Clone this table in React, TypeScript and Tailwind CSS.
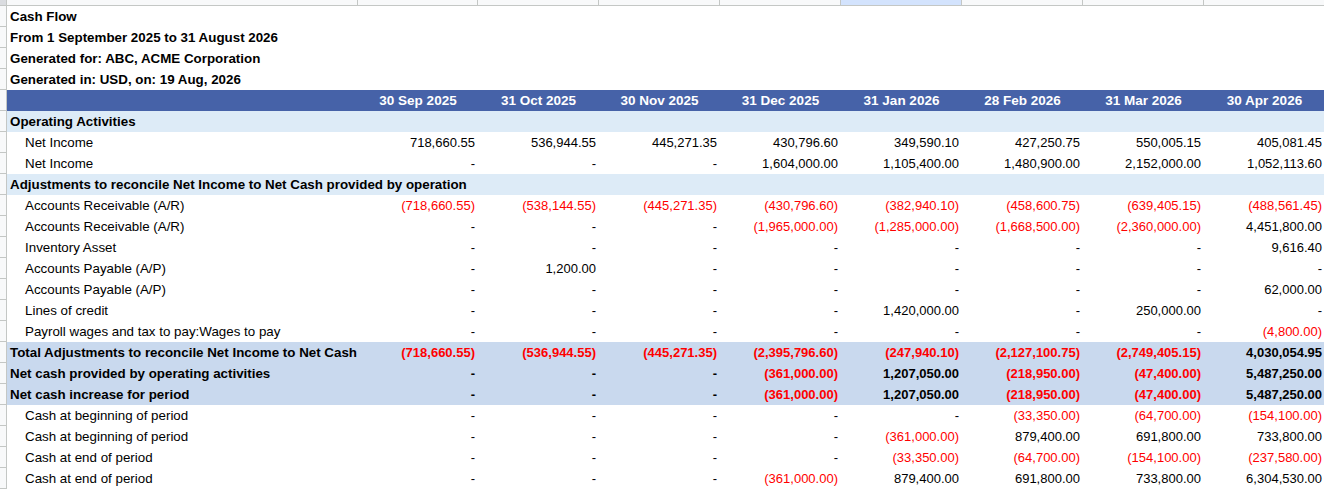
import React from "react";

type Kind = "title" | "section" | "item" | "total";

interface Row {
    kind: Kind;
    label: string;
    values?: string[];
}

const dates = [
    "30 Sep 2025",
    "31 Oct 2025",
    "30 Nov 2025",
    "31 Dec 2025",
    "31 Jan 2026",
    "28 Feb 2026",
    "31 Mar 2026",
    "30 Apr 2026",
];

const titleRows: Row[] = [
    { kind: "title", label: "Cash Flow" },
    { kind: "title", label: "From 1 September 2025 to 31 August 2026" },
    { kind: "title", label: "Generated for: ABC, ACME Corporation" },
    { kind: "title", label: "Generated in: USD, on: 19 Aug, 2026" },
];

const bodyRows: Row[] = [
    { kind: "section", label: "Operating Activities" },
    {
        kind: "item",
        label: "Net Income",
        values: ["718,660.55", "536,944.55", "445,271.35", "430,796.60", "349,590.10", "427,250.75", "550,005.15", "405,081.45"],
    },
    {
        kind: "item",
        label: "Net Income",
        values: ["-", "-", "-", "1,604,000.00", "1,105,400.00", "1,480,900.00", "2,152,000.00", "1,052,113.60"],
    },
    { kind: "section", label: "Adjustments to reconcile Net Income to Net Cash provided by operation" },
    {
        kind: "item",
        label: "Accounts Receivable (A/R)",
        values: ["(718,660.55)", "(538,144.55)", "(445,271.35)", "(430,796.60)", "(382,940.10)", "(458,600.75)", "(639,405.15)", "(488,561.45)"],
    },
    {
        kind: "item",
        label: "Accounts Receivable (A/R)",
        values: ["-", "-", "-", "(1,965,000.00)", "(1,285,000.00)", "(1,668,500.00)", "(2,360,000.00)", "4,451,800.00"],
    },
    {
        kind: "item",
        label: "Inventory Asset",
        values: ["-", "-", "-", "-", "-", "-", "-", "9,616.40"],
    },
    {
        kind: "item",
        label: "Accounts Payable (A/P)",
        values: ["-", "1,200.00", "-", "-", "-", "-", "-", "-"],
    },
    {
        kind: "item",
        label: "Accounts Payable (A/P)",
        values: ["-", "-", "-", "-", "-", "-", "-", "62,000.00"],
    },
    {
        kind: "item",
        label: "Lines of credit",
        values: ["-", "-", "-", "-", "1,420,000.00", "-", "250,000.00", "-"],
    },
    {
        kind: "item",
        label: "Payroll wages and tax to pay:Wages to pay",
        values: ["-", "-", "-", "-", "-", "-", "-", "(4,800.00)"],
    },
    {
        kind: "total",
        label: "Total Adjustments to reconcile Net Income to Net Cash",
        values: ["(718,660.55)", "(536,944.55)", "(445,271.35)", "(2,395,796.60)", "(247,940.10)", "(2,127,100.75)", "(2,749,405.15)", "4,030,054.95"],
    },
    {
        kind: "total",
        label: "Net cash provided by operating activities",
        values: ["-", "-", "-", "(361,000.00)", "1,207,050.00", "(218,950.00)", "(47,400.00)", "5,487,250.00"],
    },
    {
        kind: "total",
        label: "Net cash increase for period",
        values: ["-", "-", "-", "(361,000.00)", "1,207,050.00", "(218,950.00)", "(47,400.00)", "5,487,250.00"],
    },
    {
        kind: "item",
        label: "Cash at beginning of period",
        values: ["-", "-", "-", "-", "-", "(33,350.00)", "(64,700.00)", "(154,100.00)"],
    },
    {
        kind: "item",
        label: "Cash at beginning of period",
        values: ["-", "-", "-", "-", "(361,000.00)", "879,400.00", "691,800.00", "733,800.00"],
    },
    {
        kind: "item",
        label: "Cash at end of period",
        values: ["-", "-", "-", "-", "(33,350.00)", "(64,700.00)", "(154,100.00)", "(237,580.00)"],
    },
    {
        kind: "item",
        label: "Cash at end of period",
        values: ["-", "-", "-", "(361,000.00)", "879,400.00", "691,800.00", "733,800.00", "6,304,530.00"],
    },
];

// the first date column is one pixel narrower than the rest
const colWidth = (i: number) => (i === 0 ? "w-[120px]" : "w-[121px]");

function Gutter() {
    return <div className="w-[7px] shrink-0 h-full border-r border-b border-[#c4c7c5] bg-[#f8f9fa]" />;
}

function SheetRow({ row }: { row: Row }) {
    const bg =
        row.kind === "section"
            ? "bg-[#ddebf7]"
            : row.kind === "total"
              ? "bg-[#c9d9ee]"
              : "bg-white";
    const bold = row.kind === "item" ? "font-normal" : "font-bold";
    const indent = row.kind === "item" ? "pl-[18px]" : "pl-[3px]";

    return (
        <div className="flex h-[21px]">
            <Gutter />
            <div className={`flex flex-1 items-end pb-[2px] ${bg} ${bold}`}>
                <div className={`w-[351px] shrink-0 whitespace-nowrap text-[13.35px] leading-[16px] ${indent}`}>
                    {row.label}
                </div>
                {row.values?.map((v, i) => (
                    <div
                        key={i}
                        className={`${colWidth(i)} shrink-0 text-right pr-[3px] leading-[16px] ${
                            v.startsWith("(") ? "text-[#ff0000]" : "text-black"
                        }`}
                    >
                        {v}
                    </div>
                ))}
            </div>
        </div>
    );
}

export default function App() {
    return (
        <div
            className="w-[1324px] h-[490px] overflow-hidden bg-white text-[13px] text-black"
            style={{ fontFamily: '"Liberation Sans", Arial, sans-serif' }}
        >
            {/* column header strip */}
            <div className="flex h-[6px] border-b border-[#c4c7c5] bg-[#f8f9fa]">
                <div className="w-[7px] shrink-0 border-r border-[#c4c7c5] bg-[#dadce0]" />
                <div className="w-[351px] shrink-0 border-r border-[#c4c7c5]" />
                {dates.map((d, i) => (
                    <div
                        key={d}
                        className={`${colWidth(i)} shrink-0 border-r border-[#c4c7c5] ${
                            i === 4 ? "bg-[#d3e3fd]" : ""
                        }`}
                    />
                ))}
            </div>

            {titleRows.map((r, i) => (
                <SheetRow key={`t${i}`} row={r} />
            ))}

            {/* dates row */}
            <div className="flex h-[21px]">
                <Gutter />
                <div className="flex flex-1 items-center bg-[#4662a8] text-white font-bold">
                    <div className="w-[351px] shrink-0" />
                    {dates.map((d, i) => (
                        <div
                            key={d}
                            className={`${colWidth(i)} shrink-0 text-center text-[13.5px] leading-[16px]`}
                            style={{ fontFamily: '"Liberation Sans Narrow", "Arial Narrow", sans-serif' }}
                        >
                            {d}
                        </div>
                    ))}
                </div>
            </div>

            {bodyRows.map((r, i) => (
                <SheetRow key={`b${i}`} row={r} />
            ))}
        </div>
    );
}
